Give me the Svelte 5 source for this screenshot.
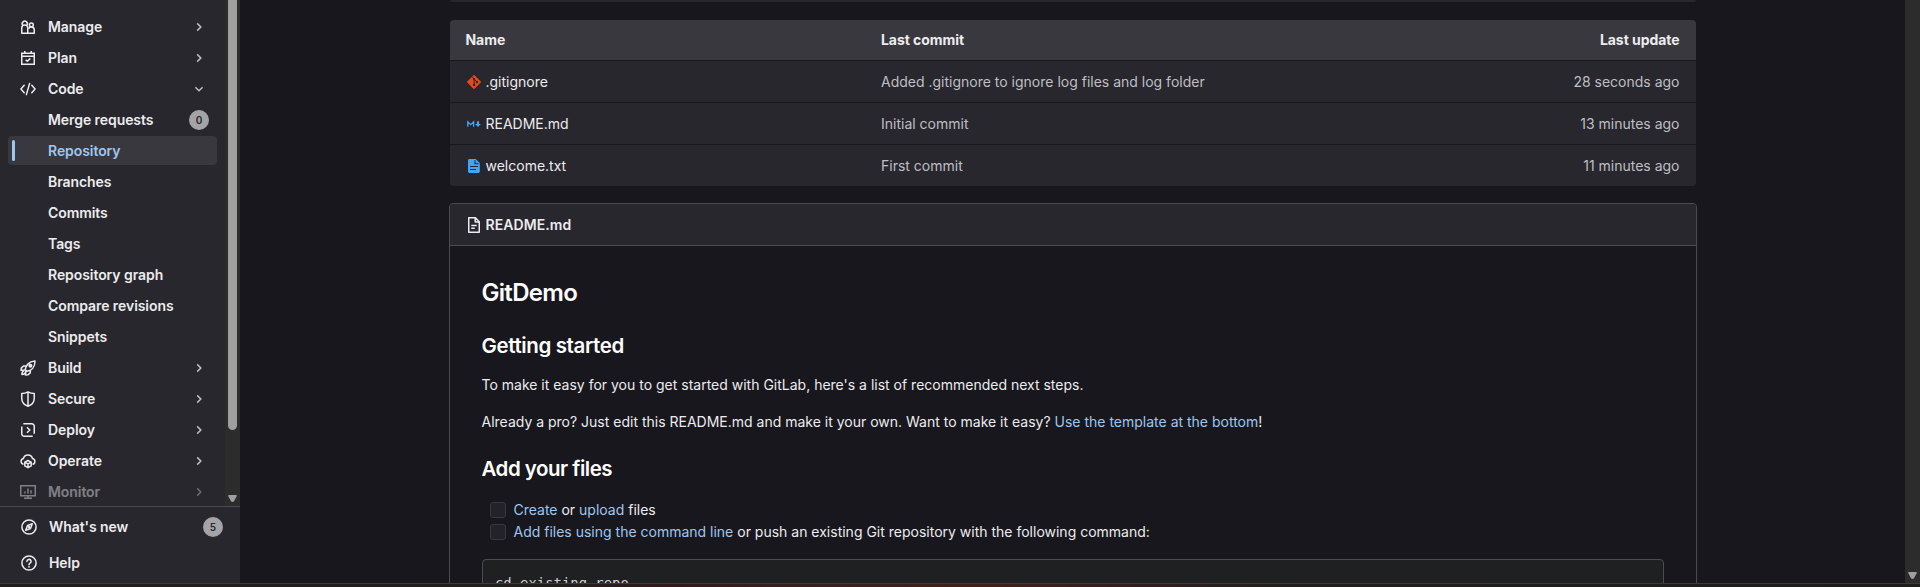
<script>
  const nav = [
    { label: 'Manage', icon: 'manage' },
    { label: 'Plan', icon: 'plan' },
    { label: 'Code', icon: 'code', open: true },
    { label: 'Merge requests', child: true, count: 0 },
    { label: 'Repository', child: true, active: true },
    { label: 'Branches', child: true },
    { label: 'Commits', child: true },
    { label: 'Tags', child: true },
    { label: 'Repository graph', child: true },
    { label: 'Compare revisions', child: true },
    { label: 'Snippets', child: true },
    { label: 'Build', icon: 'build' },
    { label: 'Secure', icon: 'secure' },
    { label: 'Deploy', icon: 'deploy' },
    { label: 'Operate', icon: 'operate' },
    { label: 'Monitor', icon: 'monitor', faded: true }
  ];
  const files = [
    { name: '.gitignore', icon: 'git', commit: 'Added .gitignore to ignore log files and log folder', when: '28 seconds ago' },
    { name: 'README.md', icon: 'markdown', commit: 'Initial commit', when: '13 minutes ago' },
    { name: 'welcome.txt', icon: 'text', commit: 'First commit', when: '11 minutes ago' }
  ];
</script>

{#snippet icon(name)}
  <svg class="icon" viewBox="0 0 16 16" width="16" height="16" fill="none" stroke="currentColor" stroke-width="1.5">
    {#if name === 'manage'}
      <path d="M2.700 6.300a2.600 2.600 0 1 1 4.200 0M1.750 14.250V8.900a3 3 0 0 1 6 0v5.350z" stroke-linejoin="round" />
      <circle cx="11.400" cy="6" r="1.900" />
      <path d="M7.750 14.250h6.500v-3.600a2.900 2.900 0 0 0-5.600-.9" stroke-linejoin="round" />
    {:else if name === 'plan'}
      <path d="M1.750 3.250h12.500v11H1.750zM1.750 6.250h12.500M4.750 1v2M11.250 1v2M5.600 9.700l1.700 1.600 3-2.900" />
    {:else if name === 'code'}
      <path d="M4.200 4.200.9 8l3.300 3.800M11.800 4.200 15.100 8l-3.300 3.800M9.600 2.400 6.400 13.600" stroke-linecap="round" />
    {:else if name === 'build'}
      <path d="M5.200 9.600c.4-3.600 3.300-8.200 9.800-8.500.1 6.100-3.600 9.600-8 10.200zM5.800 6H3.400L1.300 8.100 1 10.300l4-.3M10.300 10.400v2.400l-2.500 2-2.300.3.300-4" stroke-linejoin="round" />
      <circle cx="10.400" cy="5.800" r="1.300" fill="currentColor" />
      <path d="M4.300 10.700c-1.500.1-2.300 1.900-2.400 3.700 1.700 0 3.200-.8 3.700-2.200" stroke-linejoin="round" />
    {:else if name === 'secure'}
      <path d="M8 .9c2 1.200 4.200 1.700 6.250 1.700v4.700C14.250 11.300 11.500 14 8 15.200 4.500 14 1.750 11.300 1.750 7.300V2.600C3.800 2.600 6 2.100 8 .9zM8 1v14" stroke-linejoin="round" />
    {:else if name === 'deploy'}
      <path d="M3.300 1.750h8.450a2.500 2.500 0 0 1 2.500 2.500v7.500M12.700 14.250H4.250a2.500 2.500 0 0 1-2.500-2.500V4.700M7 5.300 9.700 8 7 10.700M14.250 11v.75M1.750 5V4.500" />
    {:else if name === 'operate'}
      <path d="M3.600 11.300A2.900 2.900 0 0 1 3.400 5.600 4.700 4.700 0 0 1 12.500 5.600a2.900 2.900 0 0 1 0 5.700" />
      <path d="M8 7.500l3.200 1.700v3.700L8 14.700l-3.200-1.800V9.200zM5 9.300l3 1.600 3-1.600M8 11v3.500" stroke-linejoin="round" />
    {:else if name === 'monitor'}
      <path d="M.75 1.750h14.500v10H.75zM4 14.250h8M8 12v2M5 7.500v2M8 4.500v5M11 6.200v3.300" />
    {:else if name === 'compass'}
      <circle cx="8" cy="8" r="7.100" />
      <path d="M11.300 4.700 9.500 9.500 4.700 11.300 6.500 6.500z" stroke-linejoin="round" />
      <circle cx="8" cy="8" r=".6" />
    {:else if name === 'help'}
      <circle cx="8" cy="8" r="7.100" />
      <path d="M5.900 6.500a2.100 2 0 1 1 3.200 1.600C8.300 8.600 8 8.900 8 9.700" stroke-linecap="round" />
      <circle cx="8" cy="11.800" r=".9" fill="currentColor" stroke="none" />
    {:else if name === 'document'}
      <path d="M2.750.75h6.700l3.800 3.900v10.600H2.750zM9.200.9v4h4M5.300 8.400h5.400M5.300 11.200h3.400" stroke-linejoin="round" />
    {:else if name === 'git'}
      <path d="M8 1.300 14.700 8 8 14.700 1.300 8z" fill="#e64a19" stroke="#e64a19" stroke-width="1" stroke-linejoin="round" />
      <path d="M6 2.500 8.100 5v6M8.300 5.300l2.500 2.500" stroke="#28272d" stroke-width="1" />
      <g fill="#28272d" stroke="none"><circle cx="8.100" cy="5.200" r="1.100" /><circle cx="8.100" cy="10.900" r="1.200" /><circle cx="10.900" cy="8" r="1.200" /></g>
    {:else if name === 'markdown'}
      <path d="M1.800 10.800V5.800L4.700 8.600 7.600 5.800V10.800" stroke="#42a5f5" stroke-width="1.300" />
      <path d="M10.900 5.200h2.200v2.700h1.800L12 11 9.100 7.900h1.800z" fill="#42a5f5" stroke="none" />
    {:else if name === 'text'}
      <path d="M3.400 1h6.200l4.200 4.100v8.500A1.400 1.400 0 0 1 12.400 15h-9A1.400 1.400 0 0 1 2 13.600V2.400A1.400 1.400 0 0 1 3.400 1z" fill="#42a5f5" stroke="none" />
      <path d="M9 2.200V5.800h3.700M4 8.500h8M4 11.500h6" stroke="#28272d" stroke-width="1.100" />
    {/if}
  </svg>
{/snippet}

<div class="window">
  <div class="screen">
    <aside>
      <div class="scroller">
        <nav>
          {#each nav as item}
            <a class="item" class:active={item.active} class:faded={item.faded}>
              <span class="slot">{#if item.icon}{@render icon(item.icon)}{/if}</span>
              <span class="label">{item.label}</span>
              {#if item.count !== undefined}
                <span class="badge">{item.count}</span>
              {:else if !item.child}
                <svg class="chevron" class:open={item.open} viewBox="0 0 12 12" width="12" height="12"><path d="M4.200 2.400 7.800 6 4.200 9.600" /></svg>
              {/if}
            </a>
          {/each}
        </nav>
        <div class="track">
          <div class="thumb"></div>
          <svg class="arrow" viewBox="0 0 9 7" width="9" height="7"><path d="M1 0h7q1 0 .8 1L6 6.200q-1.500 1.600-3 0L.2 1Q0 0 1 0z" /></svg>
        </div>
      </div>
      <footer>
        <a class="foot">{@render icon('compass')}<span class="label">What's new</span><span class="badge">5</span></a>
        <a class="foot">{@render icon('help')}<span class="label">Help</span></a>
      </footer>
    </aside>

    <main>
      <div class="column">
        <div class="commit-box"></div>
        <div class="files">
          <div class="row head"><span>Name</span><span>Last commit</span><span class="when">Last update</span></div>
          {#each files as f}
            <div class="row">
              <span class="name">{@render icon(f.icon)}{f.name}</span>
              <span>{f.commit}</span>
              <span class="when">{f.when}</span>
            </div>
          {/each}
        </div>
        <section class="readme">
          <header>{@render icon('document')}<strong>README.md</strong></header>
          <article>
            <h1>GitDemo</h1>
            <h2>Getting started</h2>
            <p>To make it easy for you to get started with GitLab, here's a list of recommended next steps.</p>
            <p>Already a pro? Just edit this README.md and make it your own. Want to make it easy? <a>Use the template at the bottom</a>!</p>
            <h2 class="second">Add your files</h2>
            <ul>
              <li><i class="check"></i><span><a>Create</a> or <a>upload</a> files</span></li>
              <li><i class="check"></i><span><a>Add files using the command line</a> or push an existing Git repository with the following command:</span></li>
            </ul>
            <pre>cd existing_repo</pre>
          </article>
        </section>
      </div>
    </main>

    <div class="track page-track">
      <svg class="arrow" viewBox="0 0 9 7" width="9" height="7"><path d="M1 0h7q1 0 .8 1L6 6.200q-1.500 1.600-3 0L.2 1Q0 0 1 0z" /></svg>
    </div>
  </div>
  <div class="taskbar"></div>
</div>

<style>
  :global(body) { margin: 0; background: #18171d; overflow: hidden; }
  .window { width: 1920px; height: 587px; display: flex; flex-direction: column; overflow: hidden; font: 14px/20px Inter, "Liberation Sans", sans-serif; color: #ececef; }
  .screen { height: 583px; display: flex; overflow: hidden; }
  .taskbar { box-sizing: border-box; height: 4px; border-top: 1px solid #3c3b3c; background: linear-gradient(90deg, #201d1c 0, #211e1c 560px, #33191a 680px, #36201c 800px, #431f1a 980px, #351e1b 1100px, #211e1d 1300px, #1e1d1c 100%); }
  .icon { flex: none; display: block; }

  aside { width: 240px; flex: none; display: flex; flex-direction: column; background: #28272d; }
  .scroller { height: 506px; display: flex; overflow: hidden; }
  nav { width: 209px; padding: 12px 8px 0; display: flex; flex-direction: column; gap: 2px; }
  .item { flex: none; box-sizing: border-box; height: 29px; display: flex; align-items: center; padding: 0 8px 0 12px; border-radius: 4px; font-weight: 600; letter-spacing: -.07px; }
  .slot { width: 16px; flex: none; }
  .label { flex: 1; margin-left: 12px; }
  .item.active { color: #9dc7f1; background: #3a383f; }
  .item.active::before { content: ""; width: 3px; height: 21px; margin: 0 5px 0 -8px; border-radius: 2px; background: #9dc7f1; }
  .faded { opacity: .45; }
  .chevron { margin-right: 4px; fill: none; stroke: #bfbfc3; stroke-width: 1.500; }
  .chevron.open { transform: rotate(90deg); }
  .badge { width: 20px; height: 20px; border-radius: 10px; background: #a4a3a8; color: #28272d; font-size: 10px; letter-spacing: 0; text-align: center; font-weight: 600; }
  .track { width: 15px; flex: none; display: flex; flex-direction: column; align-items: center; background: #2c2c2c; }
  .thumb { width: 9px; height: 430px; border-radius: 0 0 5px 5px; background: #9f9f9f; }
  .arrow { margin-top: auto; margin-bottom: 4px; fill: #9f9f9f; }
  footer { flex: 1; border-top: 1px solid #4c4b51; padding: 2px 0 0; display: flex; flex-direction: column; }
  .foot { height: 36px; display: flex; align-items: center; padding: 0 17px 0 21px; font-weight: 600; letter-spacing: -.07px; }

  main { flex: 1; display: flex; justify-content: flex-start; background: #18171d; }
  .column { width: 1248px; margin-left: 209px; }
  .commit-box { height: 2px; margin: 0 1px; background: #28272d; border-radius: 0 0 4px 4px; }
  .files { margin: 18px 1px 17px; border-radius: 4px; overflow: hidden; }
  .row { box-sizing: border-box; height: 42px; display: grid; grid-template-columns: 415px 1fr 200px; align-items: center; padding: 0 16.500px 0 16px; background: #28272d; color: #bfbfc3; border-bottom: 1px solid #18171d; }
  .row.head { height: 41px; grid-template-columns: 415.500px 1fr 200px; padding-left: 15.500px; background: #3a383f; color: #ececef; font-weight: 700; letter-spacing: -.05px; }
  .row:last-child { border-bottom: 0; height: 41px; }
  .name { display: flex; align-items: center; gap: 3.500px; color: #ececef; }
  .when { text-align: right; }
  .readme { box-sizing: border-box; height: 420px; border: 1px solid #4c4b51; border-radius: 4px; overflow: hidden; }
  header { height: 41px; display: flex; align-items: center; gap: 3.500px; padding-left: 16px; background: #28272d; border-bottom: 1px solid #4c4b51; }
  strong { font-weight: 600; letter-spacing: .08px; }
  article { padding: 32px 32px 0 31.500px; }
  h1, h2 { margin: 0; color: #fff; font-weight: 600; }
  h1 { font-size: 24px; line-height: 30px; letter-spacing: -.7px; }
  h2 { font-size: 20.500px; line-height: 25px; margin-top: 25px; letter-spacing: -.38px; }
  h2.second { margin-top: 24px; letter-spacing: -.5px; }
  p { margin: 16px 0 0; line-height: 21px; }
  a { color: #9dc7f1; text-decoration: none; }
  aside a { color: #ececef; }
  ul { list-style: none; margin: 18px 0 16px 8.500px; padding: 0; }
  li { height: 22px; display: flex; align-items: center; gap: 7.500px; }
  .check { box-sizing: border-box; width: 16px; height: 16px; border: 1px solid #3a383f; border-radius: 3px; background: #232228; }
  pre { box-sizing: border-box; margin: 0 0 0 .500px; width: 1182px; height: 80px; padding: 13px 12px; border: 1px solid #4c4b51; border-radius: 4px; background: #1f2021; color: #d0d0d3; font: 13.900px/20px "DejaVu Sans Mono", monospace; }
</style>
